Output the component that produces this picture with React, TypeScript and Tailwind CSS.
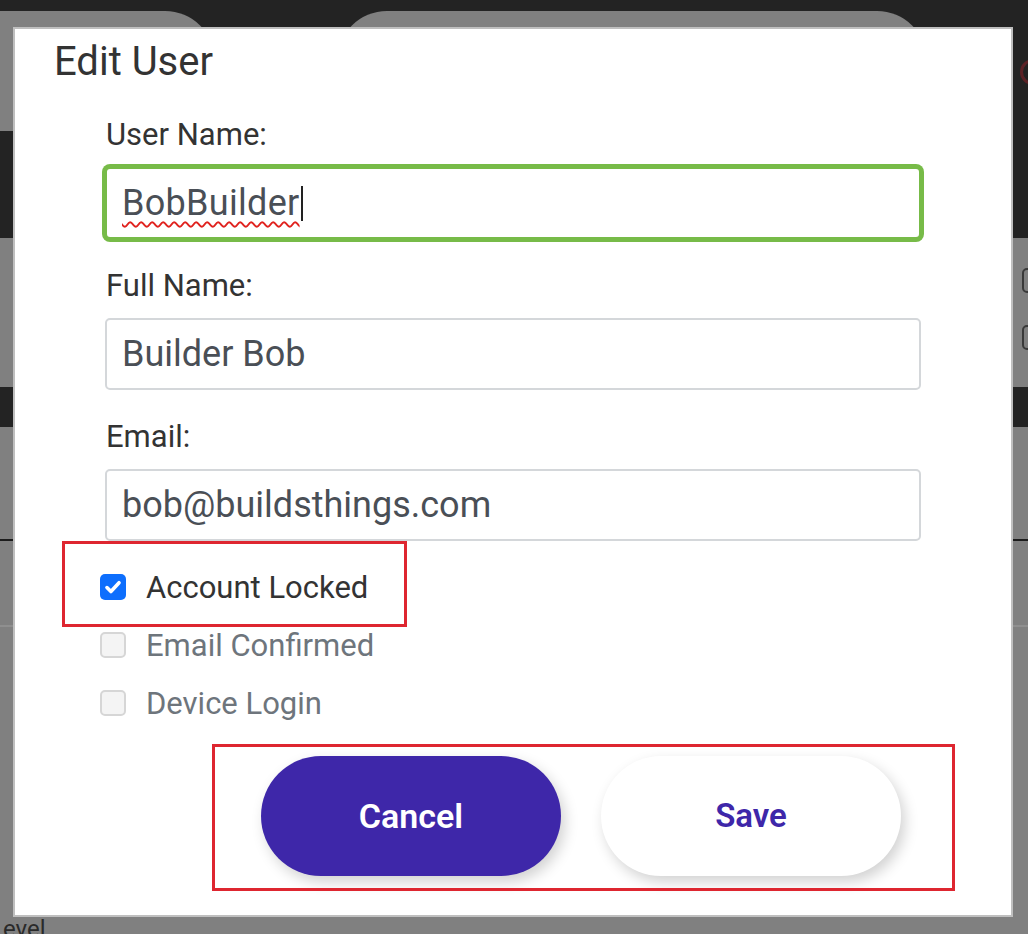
import React from 'react';

const purple = 'bg-[#3e27a9]';

function Field({ label, value, focused }: { label: string; value: string; focused?: boolean }) {
  return (
    <div className="flex flex-col">
      <label className="mb-[17px] pl-[1px] text-[31px] leading-[30px] text-[#333]">{label}</label>
      <div
        className={`flex h-[72px] w-[816px] items-center rounded-[5px] border-2 bg-white pl-[15px] text-[36px] text-[#4a4f56] ${
          focused ? 'border-[#77bb48] ring-[3px] ring-[#77bb48]' : 'border-[#d4d7da]'
        }`}
      >
        {focused ? (
          <>
            <span className="tracking-[0.3px] underline decoration-wavy decoration-[#e0221e] decoration-[1.5px] underline-offset-[6px]">
              {value}
            </span>
            <span className="ml-[1px] h-[35px] w-[2px] bg-[#222]" />
          </>
        ) : (
          <span>{value}</span>
        )}
      </div>
    </div>
  );
}

function Check({ label, checked, disabled }: { label: string; checked?: boolean; disabled?: boolean }) {
  return (
    <div className="flex h-[58px] items-center">
      {checked ? (
        <span className="flex h-[26px] w-[26px] items-center justify-center rounded-[5px] bg-[#0d6efd]">
          <svg width="22" height="22" viewBox="0 0 16 16" fill="none">
            <path d="M3.6 8.4l2.9 2.9l5.9-6.4" stroke="white" strokeWidth="2.6" strokeLinecap="round" strokeLinejoin="round" />
          </svg>
        </span>
      ) : (
        <span className="h-[26px] w-[26px] rounded-[5px] border-2 border-[#d6d6d6] bg-[#f4f4f4]" />
      )}
      <span className={`ml-[20px] text-[31px] leading-none ${disabled ? 'text-[#6e757c]' : 'text-[#333]'}`}>{label}</span>
    </div>
  );
}

export default function App() {
  return (
    <div className="relative flex h-[934px] w-full flex-col overflow-hidden bg-[#808080] font-['Roboto',sans-serif]">
      {/* page behind the overlay */}
      <div className="flex h-[238px] items-start bg-[#232323] pt-[11px]">
        <div className="h-[120px] w-[215px] rounded-tr-[50px] bg-[#808080]" />
        <div className="ml-[122px] h-[120px] w-[590px] rounded-t-[50px] bg-[#808080]" />
        <div className="ml-auto mr-[-18px] mt-[48px] h-[26px] w-[26px] rounded-full border-[3px] border-[#5c2226]" />
      </div>
      <div className="flex h-[149px] flex-col items-end gap-[32px] pt-[30px]">
        <span className="mr-[-20px] h-[25px] w-[26px] rounded-[5px] border-2 border-[#3a3a3a]" />
        <span className="mr-[-20px] h-[25px] w-[26px] rounded-[5px] border-2 border-[#3a3a3a]" />
      </div>
      <div className="h-[40px] bg-[#232323]" />
      <div className="h-[114px] border-b-2 border-[#1c1c1c]" />
      <div className="h-[86px] border-b-2 border-[#8f8f8f]" />
      <div className="mt-auto pl-[3px] text-[24px] leading-[30px] text-[#2a2a2a] translate-y-[10px]">evel</div>

      {/* modal */}
      <div className="absolute left-[13px] top-[27px] h-[890px] w-[1000px] border-2 border-black/25 bg-white">
        <h2 className="pl-[39px] pt-[13px] text-[40px] font-normal leading-none text-[#333]">Edit User</h2>

        <div className="mt-[38px] flex flex-col gap-[32px] pl-[90px]">
          <Field label="User Name:" value="BobBuilder" focused />
          <Field label="Full Name:" value="Builder Bob" />
          <Field label="Email:" value="bob@buildsthings.com" />
        </div>

        <div className="mt-[17px] flex flex-col pl-[85px]">
          <Check label="Account Locked" checked />
          <Check label="Email Confirmed" disabled />
          <Check label="Device Login" disabled />
        </div>

        <div className="ml-[246px] mt-[24px] flex gap-[40px]">
          <button
            className={`flex h-[120px] w-[300px] items-center justify-center rounded-full ${purple} text-[34px] font-semibold text-white shadow-[4px_6px_14px_rgba(0,0,0,0.18)]`}
          >
            Cancel
          </button>
          <button className="flex h-[120px] w-[300px] items-center justify-center rounded-full bg-white text-[33px] font-semibold text-[#3e27a9] shadow-[4px_6px_14px_rgba(0,0,0,0.18)]">
            Save
          </button>
        </div>
      </div>

      {/* annotation boxes */}
      <div className="absolute left-[62px] top-[541px] h-[86px] w-[345px] border-[3px] border-[#de2630]" />
      <div className="absolute left-[212px] top-[744px] h-[147px] w-[743px] border-[3px] border-[#de2630]" />
    </div>
  );
}
